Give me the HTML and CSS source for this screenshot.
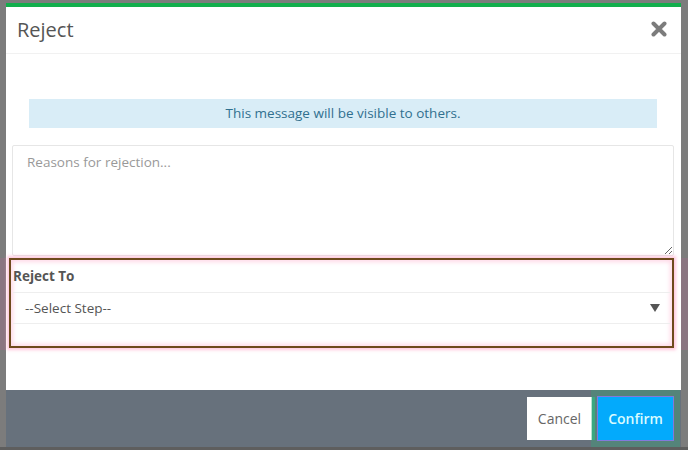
FILE: index.html
```html
<!DOCTYPE html>
<html lang="en">
<head>
  <meta charset="UTF-8" />
  <title>Reject</title>
  <link rel="stylesheet" href="styles.css">
</head>
<body>
  <div class="modal">
    <header class="modal-header">
      <h4 class="modal-title">Reject</h4>
      <button class="modal-close" aria-label="Close">
        <svg width="16" height="16" viewBox="0 0 16 16">
          <path d="M2.5 2.5 L13.5 13.5 M13.5 2.5 L2.5 13.5" stroke="#7c7c7c" stroke-width="4" stroke-linecap="round" fill="none"/>
        </svg>
      </button>
    </header>

    <div class="modal-body">
      <div class="alert-info">This message will be visible to others.</div>
      <textarea class="reason-input" placeholder="Reasons for rejection..."></textarea>

      <div class="reject-to">
        <label class="reject-label">Reject To</label>
        <div class="step-select">
          <span>--Select Step--</span>
          <svg class="caret" width="10" height="8" viewBox="0 0 10 8">
            <path d="M0 0 H10 L5 8 Z" fill="#555"/>
          </svg>
        </div>
      </div>
    </div>

    <footer class="modal-footer">
      <button class="btn btn-cancel">Cancel</button>
      <button class="btn btn-confirm">Confirm</button>
    </footer>
  </div>
</body>
</html>
```

FILE: styles.css
```css
* {
  margin: 0;
  padding: 0;
  box-sizing: border-box;
}

body {
  font-family: 'Open Sans', 'Liberation Sans', sans-serif;
  font-size: 13.5px;
  color: #555;
  background: linear-gradient(to bottom, #7c7c7c 0 258px, #8a7581 258px 350px, #7c7c7c 350px 447px, #5e5e5e 447px);
  height: 450px;
  overflow: hidden;
  padding-top: 3px;
}

.modal {
  width: 675px;
  margin-left: 6px;
  background: #fff;
  border-top: 4px solid #12ae4c;
}

/* Header */
.modal-header {
  height: 47px;
  display: flex;
  align-items: center;
  justify-content: space-between;
  padding: 0 14px 0 11px;
  border-bottom: 1px solid #f1f1f1;
}

.modal-title {
  font-size: 20px;
  font-weight: 400;
  color: #555;
  margin-top: -1px;
}

.modal-close {
  border: none;
  background: none;
  display: flex;
  margin-top: -2px;
}

/* Body */
.modal-body {
  padding-top: 45px;
  height: 336px;
}

.alert-info {
  margin: 0 24px 0 23px;
  height: 29px;
  line-height: 28px;
  text-align: center;
  background: #d9edf7;
  color: #31708f;
}

.reason-input {
  display: block;
  margin: 17px 0 0 6px;
  width: 662px;
  height: 111px;
  padding: 6px 14px;
  border: 1px solid #e6e6e6;
  border-radius: 2px;
  font-family: inherit;
  font-size: 13.5px;
  line-height: 20px;
  color: #555;
  resize: vertical;
}

.reason-input::placeholder {
  color: #999;
}

.reject-to {
  margin: 2px 0 0 3px;
  width: 665px;
  height: 90px;
  border: 2px solid #6e4a1c;
  box-shadow: 0 0 3px 2px rgba(255, 175, 205, 0.7), inset 0 0 4px 2px rgba(255, 190, 215, 0.6);
  padding: 6px 2px 0 2px;
}

.reject-label {
  display: block;
  font-weight: 700;
  line-height: 20px;
  color: #555;
}

.step-select {
  margin-top: 6px;
  height: 32px;
  display: flex;
  align-items: center;
  justify-content: space-between;
  padding: 0 10px 0 12px;
  border-top: 1px solid #eeeeee;
  border-bottom: 1px solid #eeeeee;
  color: #555;
}

/* Footer */
.modal-footer {
  height: 57px;
  background: #67717c;
  display: flex;
  justify-content: flex-end;
  align-items: flex-start;
  gap: 6px;
  padding: 7px 8px 0 0;
}

.btn {
  height: 43px;
  border: none;
  font-family: inherit;
  font-size: 14px;
}

.btn-cancel {
  width: 65px;
  background: #fff;
  color: #666;
  box-shadow: 3px 0 0 0 #3fa888;
}

.btn-confirm {
  width: 75px;
  background: #03aafc;
  color: #d8fbff;
  font-weight: 600;
  box-shadow: 0 0 0 1px #8479dc, 0 0 0 7px rgba(50, 170, 120, 0.35);
}
```
